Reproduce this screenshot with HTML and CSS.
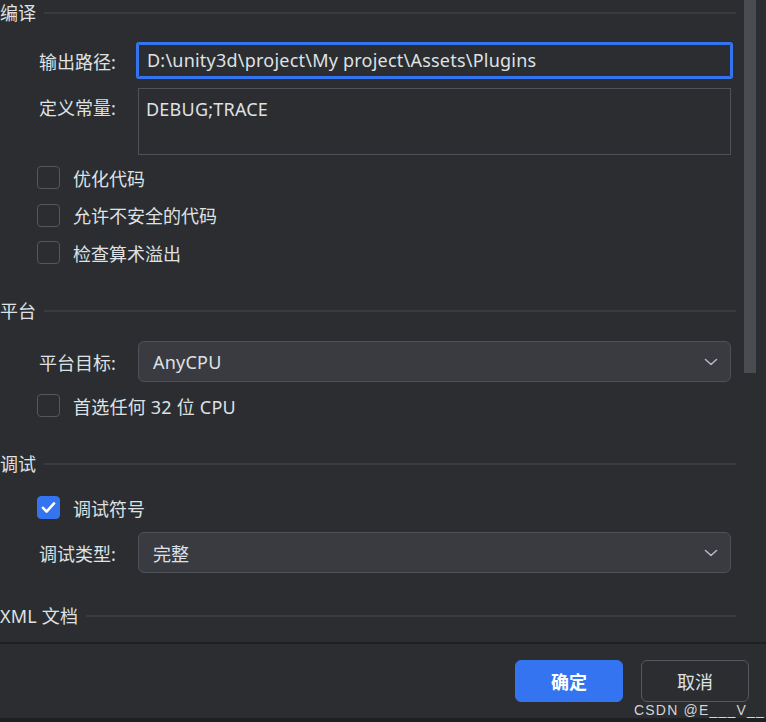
FILE: index.html
```html
<!DOCTYPE html>
<html lang="zh">
<head>
<meta charset="utf-8">
<title>项目属性</title>
<link rel="stylesheet" href="styles.css">
</head>
<body>
<div class="window">
  <div class="content">
    <div class="main">
      <div class="section-head"><span>编译</span><i class="rule"></i></div>
      <div class="form-row first">
        <label class="label">输出路径:</label>
        <div class="input focus latin">D:\unity3d\project\My project\Assets\Plugins</div>
      </div>
      <div class="form-row top gap11">
        <label class="label lbl-top">定义常量:</label>
        <div class="textarea latin">DEBUG;TRACE</div>
      </div>
      <div class="checks c1">
        <div class="check"><span class="box"></span><span>优化代码</span></div>
        <div class="check"><span class="box"></span><span>允许不安全的代码</span></div>
        <div class="check"><span class="box"></span><span>检查算术溢出</span></div>
      </div>

      <div class="section-head s2"><span>平台</span><i class="rule"></i></div>
      <div class="form-row g17">
        <label class="label">平台目标:</label>
        <div class="select"><span class="latin">AnyCPU</span><svg class="chev" width="14" height="8" viewBox="0 0 14 8"><path d="M1.5 1.5 L7 6.5 L12.5 1.5" fill="none" stroke="#b4b7bd" stroke-width="1.6" stroke-linecap="round" stroke-linejoin="round"/></svg></div>
      </div>
      <div class="checks c2">
        <div class="check"><span class="box"></span><span class="latin">首选任何 32 位 CPU</span></div>
      </div>

      <div class="section-head s3"><span>调试</span><i class="rule"></i></div>
      <div class="checks c3">
        <div class="check"><span class="box on"><svg width="23" height="23" viewBox="0 0 23 23"><path d="M6 11.8 L9.6 15.6 L17 7.4" fill="none" stroke="#ffffff" stroke-width="2.6" stroke-linecap="round" stroke-linejoin="round"/></svg></span><span>调试符号</span></div>
      </div>
      <div class="form-row g13">
        <label class="label">调试类型:</label>
        <div class="select"><span>完整</span><svg class="chev" width="14" height="8" viewBox="0 0 14 8"><path d="M1.5 1.5 L7 6.5 L12.5 1.5" fill="none" stroke="#b4b7bd" stroke-width="1.6" stroke-linecap="round" stroke-linejoin="round"/></svg></div>
      </div>

      <div class="section-head s4"><span class="latin">XML 文档</span><i class="rule"></i></div>
    </div>
    <div class="track"><div class="thumb"></div></div>
  </div>
  <div class="footer">
    <button class="btn primary">确定</button>
    <button class="btn">取消</button>
    <span class="watermark">CSDN @E___V__</span>
  </div>
</div>
</body>
</html>
```

FILE: styles.css
```css
html, body {
  margin: 0;
  padding: 0;
  background: #2b2d30;
}
body {
  width: 766px;
  height: 722px;
  overflow: hidden;
  font-family: "Noto Sans", "Noto Sans CJK SC", sans-serif;
  font-size: 18px;
  color: #dfe1e5;
}
.latin {
  letter-spacing: 0.22px;
}
.window {
  width: 766px;
  height: 722px;
  display: flex;
  flex-direction: column;
  background: #2b2d30;
}
.content {
  height: 642px;
  display: flex;
  overflow: hidden;
}
.main {
  width: 736px;
  display: flex;
  flex-direction: column;
}
.track {
  width: 12px;
  margin-left: 8px;
}
.thumb {
  width: 12px;
  height: 373px;
  background: #4b4c51;
}
.section-head {
  height: 26px;
  display: flex;
  align-items: center;
  gap: 8px;
  line-height: 26px;
  white-space: nowrap;
}
.section-head .rule {
  flex: 1;
  height: 2px;
  background: #393b40;
}
.s2 { margin-top: 34px; }
.s3 { margin-top: 34px; }
.s4 { margin-top: 30px; }

.form-row {
  display: flex;
  align-items: center;
  padding-left: 39px;
}
.form-row.top { align-items: flex-start; }
.form-row.first { margin-top: 18px; }
.gap11 { margin-top: 11px; }
.g17 { margin-top: 17px; }
.g13 { margin-top: 13px; }
.label {
  width: 99px;
  flex: none;
  white-space: nowrap;
}
.lbl-top { padding-top: 7px; line-height: 26px; }

.input {
  box-sizing: border-box;
  width: 593px;
  height: 33px;
  padding: 0 8px;
  line-height: 31px;
  border: 1px solid #3574f0;
  box-shadow: 0 0 0 2px #3574f0;
  border-radius: 1px;
  white-space: nowrap;
}
.textarea {
  box-sizing: border-box;
  width: 593px;
  height: 67px;
  padding: 7px 7px;
  line-height: 26px;
  border: 1px solid #4e5157;
}
.checks {
  display: flex;
  flex-direction: column;
  gap: 14.5px;
  padding-left: 37px;
}
.c1 { margin-top: 11px; }
.c2 { margin-top: 12px; }
.c3 { margin-top: 19px; }
.check {
  display: flex;
  align-items: center;
  gap: 13px;
  height: 23px;
  white-space: nowrap;
}
.box {
  box-sizing: border-box;
  width: 23px;
  height: 23px;
  border: 1.5px solid #55575c;
  border-radius: 4px;
  flex: none;
  display: block;
}
.box.on {
  background: #3574f0;
  border-color: #3574f0;
}
.box.on svg {
  display: block;
  margin: -1.5px;
}
.select {
  box-sizing: border-box;
  width: 593px;
  height: 41px;
  display: flex;
  align-items: center;
  justify-content: space-between;
  padding: 0 12px 0 14px;
  background: #393b40;
  border: 1px solid #4e5157;
  border-radius: 6px;
}
.chev { display: block; }

.footer {
  position: relative;
  flex: 1;
  border-top: 2px solid #1e1f22;
  border-bottom: 4px solid #1e1f22;
  display: flex;
  justify-content: flex-end;
  align-items: flex-start;
  gap: 18px;
  padding: 16px 17px 0 0;
}
.btn {
  box-sizing: border-box;
  width: 108px;
  height: 42px;
  border-radius: 6px;
  border: 1.5px solid #55585e;
  background: transparent;
  color: #dfe1e5;
  font-family: "Noto Sans CJK SC", sans-serif;
  font-size: 18px;
  padding: 0;
}
.btn.primary {
  background: #3574f0;
  border-color: #3574f0;
  color: #ffffff;
  font-weight: bold;
}
.watermark {
  position: absolute;
  left: 634px;
  top: 58px;
  font-family: "Liberation Sans", sans-serif;
  font-size: 14px;
  line-height: 16px;
  letter-spacing: 1.2px;
  color: #d4d4d4;
  white-space: nowrap;
}
```
